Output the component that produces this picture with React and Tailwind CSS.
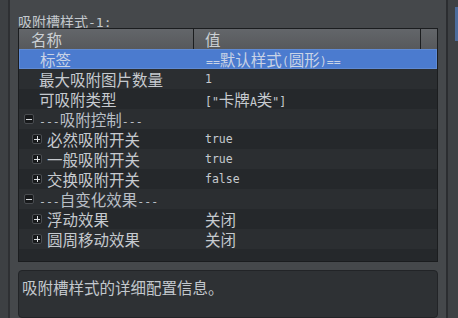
import React from "react";

const CJK = /([\u3000-\u303f\u4e00-\u9fff\uff00-\uffef]+)/;

// mixes CJK runs (sans) with ascii runs (mono), like the source widget font
const Txt = ({ s, big = "text-[15.5px]", small = "text-[11.5px]" }) => (
  <span className="inline-flex items-baseline h-[18px] leading-[18px]">
    {s
      .split(CJK)
      .filter(Boolean)
      .map((part, i) =>
        CJK.test(part) ? (
          <span key={i} className={`font-['Noto_Sans_CJK_SC',sans-serif] ${big}`}>
            {part}
          </span>
        ) : (
          <span key={i} className={`font-['DejaVu_Sans_Mono',monospace] ${small}`}>
            {part}
          </span>
        )
      )}
  </span>
);

const rows = [
  { name: "标签", value: "==默认样式(圆形)==", selected: true },
  { name: "最大吸附图片数量", value: "1" },
  { name: "可吸附类型", value: '["卡牌A类"]' },
  { name: "---吸附控制---", group: true },
  { name: "必然吸附开关", value: "true", child: true },
  { name: "一般吸附开关", value: "true", child: true },
  { name: "交换吸附开关", value: "false", child: true },
  { name: "---自变化效果---", group: true },
  { name: "浮动效果", value: "关闭", child: true },
  { name: "圆周移动效果", value: "关闭", child: true },
];

const Box = ({ sign }) => (
  <span className="relative shrink-0 w-[10px] h-[10px] rounded-[2px] bg-[#17191b] border border-[#4a4d51] flex items-center justify-center">
    <span className="absolute w-[6px] h-px bg-[#dde0e3]" />
    {sign === "+" && <span className="absolute w-px h-[6px] bg-[#dde0e3]" />}
  </span>
);

const Row = ({ row, index }) => {
  const bg = row.selected
    ? "bg-[#4b7bcf] border border-[#5f8ad4]"
    : index % 2 === 1
    ? "bg-[#2b2e31]"
    : "bg-[#25282b]";
  const color = row.selected ? "text-[#c9d3e6]" : "text-[#c6cacf]";
  return (
    <div className={`h-[20px] flex items-center ${bg}`}>
      <div className="w-[175px] flex items-center h-full">
        {row.group ? (
          <div className="flex items-center pl-[5px] gap-[5px] text-[#b9bfc6]">
            <Box sign="-" />
            <Txt s={row.name} />
          </div>
        ) : row.child ? (
          <div className={`flex items-center pl-[13px] gap-[5px] ${color}`}>
            <Box sign="+" />
            <Txt s={row.name} />
          </div>
        ) : (
          <div className={`flex items-center pl-[20px] ${color}`}>
            <Txt s={row.name} />
          </div>
        )}
      </div>
      {row.value && (
        <div className={`flex items-center pl-[11px] ${color}`}>
          <Txt s={row.value} />
        </div>
      )}
    </div>
  );
};

export default function App() {
  return (
    <div className="w-[458px] h-[318px] overflow-hidden flex bg-[#45484b]">
      <div className="w-[8px] bg-[#3d4043]" />
      <div className="w-[2px] bg-[#2e3033]" />

      <div className="pl-[8px] flex flex-col">
        <div className="h-[28px] pt-[9px] text-[#c3c8cd]">
          <Txt s="吸附槽样式-1:" big="text-[14px]" small="text-[13px]" />
        </div>

        <div className="w-[420px] h-[242px] border border-[#1b1d1f] bg-[#25282b] flex flex-col">
          <div className="h-[20px] flex items-center bg-gradient-to-b from-[#63666a] to-[#57595c] text-[#ccd0d4]">
            <div className="w-[175px] h-full flex items-center border-r border-[#1b1d1f] pl-[12px]">
              <Txt s="名称" />
            </div>
            <div className="w-[227px] h-full flex items-center border-r border-[#1b1d1f] pl-[11px]">
              <Txt s="值" />
            </div>
            <div className="flex-1" />
          </div>
          {rows.map((row, i) => (
            <Row key={i} row={row} index={i} />
          ))}
          <div className="flex-1 bg-[#25282b]" />
        </div>

        <div className="mt-[8px] w-[420px] h-[50px] rounded-[4px] border border-[#222427] bg-[#2e3134] px-[3px] pt-[5px] text-[#c3c8cd]">
          <Txt s="吸附槽样式的详细配置信息。" />
        </div>
      </div>

      <div className="w-[8px]" />
      <div className="w-[2px] bg-[#2b2d30]" />
      <div className="w-[10px] bg-[#3e4144] flex justify-end">
        <div className="w-[3px] h-[34px] mt-[7px] bg-[#4d6c9c]" />
      </div>
    </div>
  );
}
